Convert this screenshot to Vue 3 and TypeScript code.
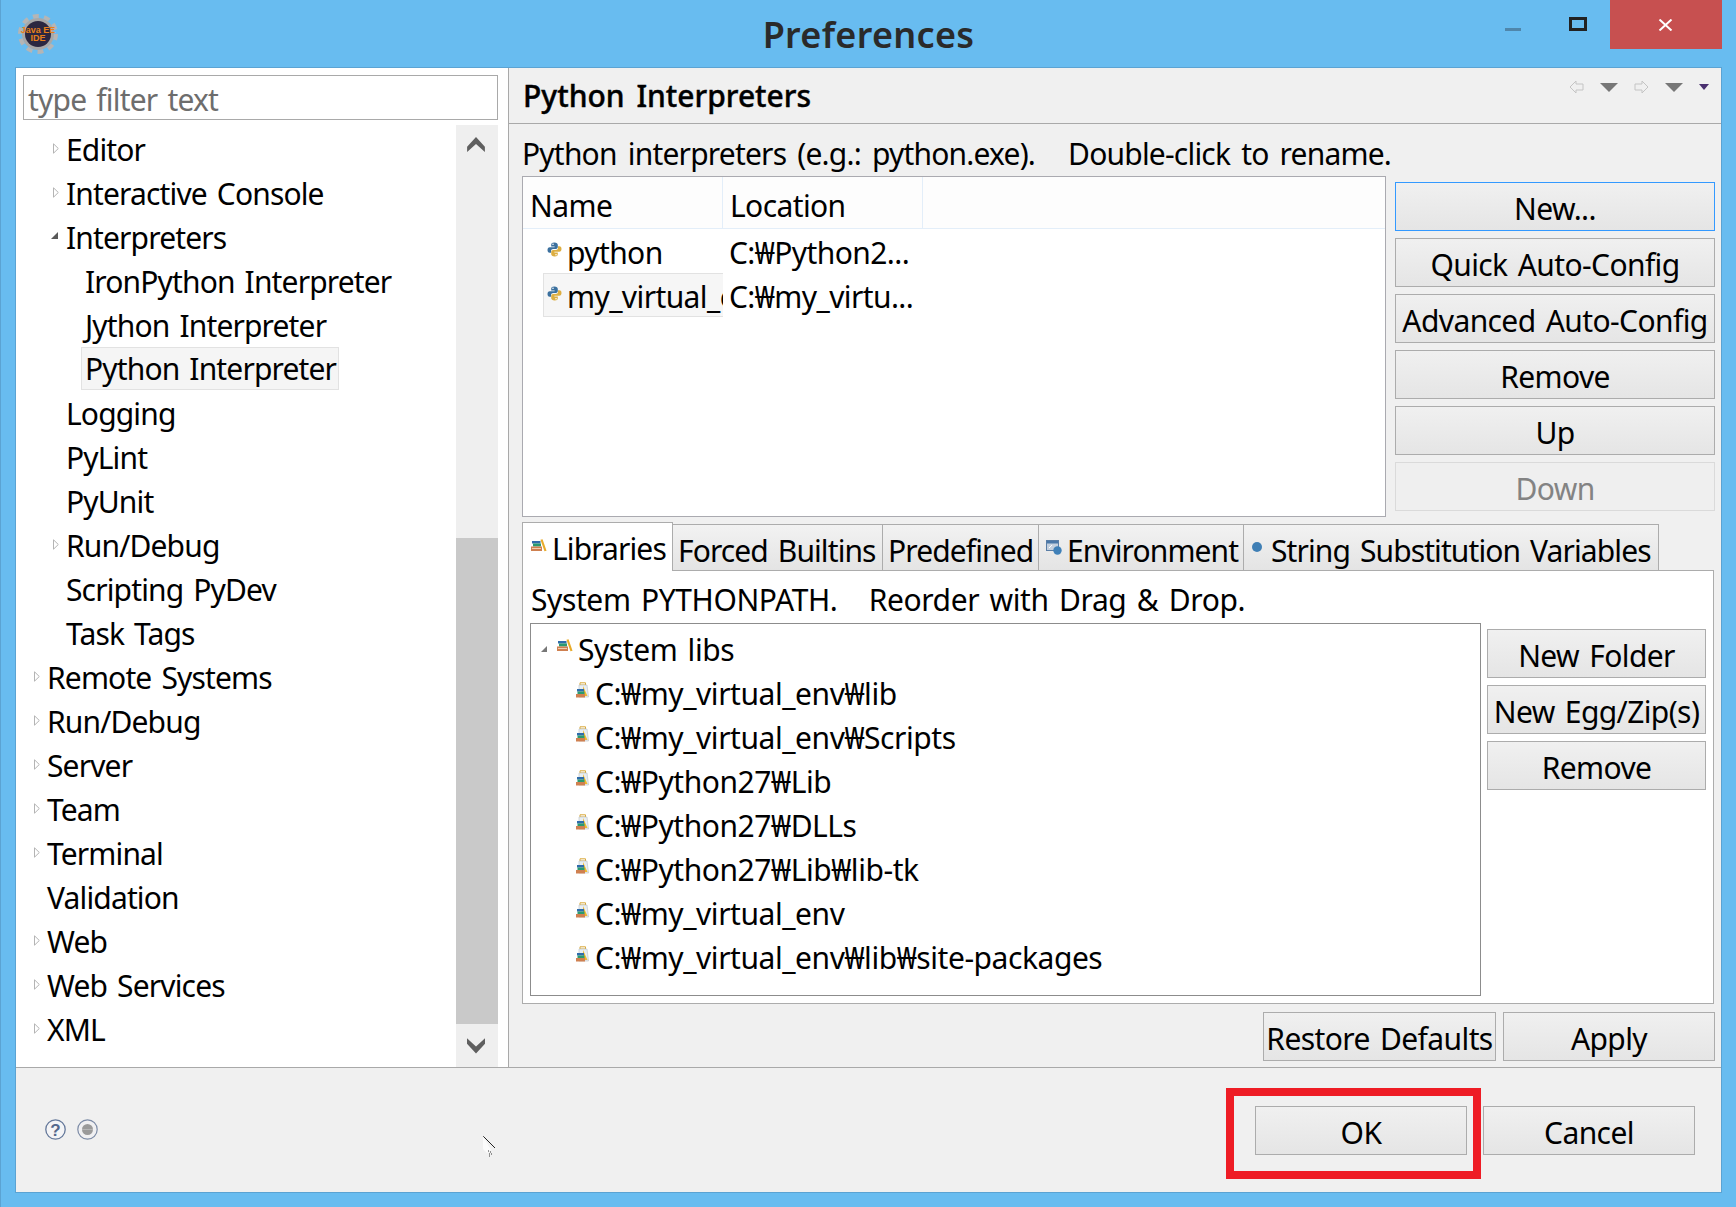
<script setup lang="ts">
type TreeRow = { label: string; level: number; arrow?: "closed" | "open"; selected?: boolean };

const navRows: TreeRow[] = [
  { label: "Editor", level: 1, arrow: "closed" },
  { label: "Interactive Console", level: 1, arrow: "closed" },
  { label: "Interpreters", level: 1, arrow: "open" },
  { label: "IronPython Interpreter", level: 2 },
  { label: "Jython Interpreter", level: 2 },
  { label: "Python Interpreter", level: 2, selected: true },
  { label: "Logging", level: 1 },
  { label: "PyLint", level: 1 },
  { label: "PyUnit", level: 1 },
  { label: "Run/Debug", level: 1, arrow: "closed" },
  { label: "Scripting PyDev", level: 1 },
  { label: "Task Tags", level: 1 },
  { label: "Remote Systems", level: 0, arrow: "closed" },
  { label: "Run/Debug", level: 0, arrow: "closed" },
  { label: "Server", level: 0, arrow: "closed" },
  { label: "Team", level: 0, arrow: "closed" },
  { label: "Terminal", level: 0, arrow: "closed" },
  { label: "Validation", level: 0 },
  { label: "Web", level: 0, arrow: "closed" },
  { label: "Web Services", level: 0, arrow: "closed" },
  { label: "XML", level: 0, arrow: "closed" },
];

const interpreters = [
  { name: "python", location: "C:₩Python2...", picked: false },
  { name: "my_virtual_env", location: "C:₩my_virtu...", picked: true },
];

const interpreterButtons = ["New...", "Quick Auto-Config", "Advanced Auto-Config", "Remove", "Up", "Down"];

const libPaths = [
  "C:₩my_virtual_env₩lib",
  "C:₩my_virtual_env₩Scripts",
  "C:₩Python27₩Lib",
  "C:₩Python27₩DLLs",
  "C:₩Python27₩Lib₩lib-tk",
  "C:₩my_virtual_env",
  "C:₩my_virtual_env₩lib₩site-packages",
];

const snake = "M7.400 .5C4.600 .5 4.200 1.700 4.200 3V4.500H7.600V5.200H2.800C1.200 5.200 .5 6.400 .5 8S1.200 10.700 2.600 10.700H4V9C4 7.800 5 7 6.200 7H9C10 7 10.800 6.200 10.800 5.100V3C10.800 1.500 9.600 .5 7.400 .5Z";
</script>

<template>
  <div class="window">
    <svg class="defs" width="0" height="0">
      <symbol id="books" viewBox="0 0 16 13">
        <path d="M10.500 .5 14.500 12" stroke="#e8ab2a" stroke-width="2.200" fill="none" />
        <rect x="1" y="2" width="8.500" height="2.500" fill="#2f6cab" />
        <rect x="2" y="4.500" width="8" height="3" fill="#2a9a70" />
        <rect x="0" y="7.500" width="11" height="4.500" fill="#cf8050" />
        <rect x="1" y="9" width="9" height="1" fill="#f0d0b0" />
      </symbol>
    </svg>

    <header class="titlebar">
      <svg class="logo" width="40" height="40" viewBox="0 0 40 40">
        <circle cx="20" cy="20" r="16" fill="#a8a8a8" />
        <circle cx="20" cy="20" r="18" fill="none" stroke="#b5b5b5" stroke-width="4" stroke-dasharray="6 5.300" />
        <circle cx="20" cy="20" r="13" fill="#2b2740" />
        <text x="20" y="18.500" text-anchor="middle" class="logo-text">Java EE</text>
        <text x="20" y="27" text-anchor="middle" class="logo-text">IDE</text>
      </svg>
      <div class="title">Preferences</div>
      <div class="controls">
        <span class="minimize"></span>
        <span class="maximize"></span>
        <span class="close">
          <svg width="15" height="12" viewBox="0 0 15 12"><path d="M1.500 .5 13.500 11.500M13.500 .5 1.500 11.500" stroke="#fff" stroke-width="2" /></svg>
        </span>
      </div>
    </header>

    <div class="dialog">
      <div class="main">
        <aside class="nav">
          <div class="filter">type filter text</div>
          <div class="nav-body">
            <ul class="nav-tree">
              <li v-for="row in navRows" :key="row.label + row.level" class="nav-row" :class="`lv${row.level}`">
                <svg v-if="row.arrow === 'closed'" class="arrow closed" width="6" height="11" viewBox="0 0 6 11">
                  <path d="M.5 .8 5.300 5.500 .5 10.200Z" fill="#fff" stroke="#b4b4b4" />
                </svg>
                <svg v-if="row.arrow === 'open'" class="arrow open" width="7" height="7" viewBox="0 0 7 7">
                  <path d="M7 0V7H0Z" fill="#595959" />
                </svg>
                <span :class="{ selected: row.selected }">{{ row.label }}</span>
              </li>
            </ul>
            <div class="scrollbar">
              <svg class="chev" width="18" height="16" viewBox="0 0 20 18"><path d="M0 11 10 0 20 11V17L10 8 0 17Z" fill="#5f5f5f" /></svg>
              <div class="thumb-space"></div>
              <div class="thumb"></div>
              <svg class="chev" width="18" height="17" viewBox="0 0 20 18"><path d="M0 1 10 10 20 1V7L10 18 0 7Z" fill="#5f5f5f" /></svg>
            </div>
          </div>
        </aside>

        <section class="page">
          <div class="page-head">
            <h1>Python Interpreters</h1>
            <div class="page-tools">
              <svg width="15" height="14" viewBox="0 0 15 14"><path d="M7 1 1 7l6 6V10h7V4H7Z" fill="none" stroke="#c4c4c4" /></svg>
              <i class="drop big"></i>
              <svg width="15" height="14" viewBox="0 0 15 14"><path d="M8 1l6 6-6 6V10H1V4h7Z" fill="none" stroke="#c4c4c4" /></svg>
              <i class="drop big"></i>
              <i class="drop small"></i>
            </div>
          </div>

          <div class="page-body">
            <p class="hint">Python interpreters (e.g.: python.exe).&nbsp;&nbsp; Double-click to rename.</p>
            <div class="interp-row">
              <div class="table">
                <div class="thead">
                  <span class="col-name">Name</span>
                  <span class="col-loc">Location</span>
                </div>
                <div v-for="it in interpreters" :key="it.name" class="tr">
                  <span class="cell-name" :class="{ picked: it.picked }">
                    <svg class="py" width="15" height="15" viewBox="0 0 15 15">
                      <path :d="snake" fill="#3b709e" />
                      <path :d="snake" fill="#dcae42" transform="rotate(180 7.500 7.500)" />
                      <circle cx="6" cy="2.300" r=".8" fill="#fff" />
                      <circle cx="9" cy="12.700" r=".8" fill="#fff" />
                    </svg>
                    <span class="clip">{{ it.name }}</span>
                  </span>
                  <span class="cell-loc">{{ it.location }}</span>
                </div>
              </div>
              <div class="btn-col">
                <button
                  v-for="(b, i) in interpreterButtons"
                  :key="b"
                  class="btn"
                  :class="{ focused: i === 0, disabled: b === 'Down' }"
                >{{ b }}</button>
              </div>
            </div>

            <div class="tabs">
              <div class="tab active" style="width: 151px">
                <svg width="16" height="13"><use href="#books" /></svg>
                <span>Libraries</span>
              </div>
              <div class="tab" style="width: 210px"><span>Forced Builtins</span></div>
              <div class="tab" style="width: 156px"><span>Predefined</span></div>
              <div class="tab tab-env" style="width: 205px">
                <svg width="16" height="15" viewBox="0 0 16 15">
                  <rect x="0.500" y="0.500" width="12" height="10" fill="#c4d0de" stroke="#5a7ea6" />
                  <rect x="1" y="1" width="11" height="2.500" fill="#4b78a8" />
                  <path d="M3 8 6 5" stroke="#fff" />
                  <circle cx="11.500" cy="10.500" r="4.200" fill="#3f80b8" />
                </svg>
                <span>Environment</span>
              </div>
              <div class="tab" style="width: 415px">
                <i class="dot"></i>
                <span>String Substitution Variables</span>
              </div>
            </div>

            <div class="tab-panel">
              <p class="hint small">System PYTHONPATH.&nbsp;&nbsp; Reorder with Drag &amp; Drop.</p>
              <div class="lib-row">
                <div class="lib-tree">
                  <div class="lib-row-item root">
                    <i class="mini"></i>
                    <svg width="16" height="13"><use href="#books" /></svg>
                    <span>System libs</span>
                  </div>
                  <div v-for="p in libPaths" :key="p" class="lib-row-item">
                    <svg width="13" height="16" viewBox="0 0 13 16">
                      <path d="M4 .8h5.500V3H4Z" fill="none" stroke="#d9a93a" />
                      <path d="M3 3h8l1.500 12H3Z" fill="#e9eef2" stroke="#b9bfc4" stroke-width=".6" />
                      <path d="M7 4 11.500 14H7Z" fill="#efb92e" />
                      <rect x="1" y="7" width="7" height="2.500" fill="#2f6cab" />
                      <rect x="1.500" y="9.500" width="7" height="2.500" fill="#2a9a70" />
                      <rect x="0" y="12" width="9" height="3.500" fill="#cf8050" />
                    </svg>
                    <span>{{ p }}</span>
                  </div>
                </div>
                <div class="side-btns">
                  <button class="btn">New Folder</button>
                  <button class="btn">New Egg/Zip(s)</button>
                  <button class="btn">Remove</button>
                </div>
              </div>
            </div>

            <div class="page-actions">
              <button class="btn restore">Restore Defaults</button>
              <button class="btn apply">Apply</button>
            </div>
          </div>
        </section>
      </div>

      <footer class="footer">
        <div class="help">
          <svg width="21" height="21" viewBox="0 0 21 21">
            <circle cx="10.500" cy="10.500" r="9.700" fill="#f4f4f6" stroke="#64789a" stroke-width="1.300" />
            <text x="10.500" y="16.500" text-anchor="middle" class="q">?</text>
          </svg>
          <svg width="21" height="21" viewBox="0 0 21 21">
            <circle cx="10.500" cy="10.500" r="9.700" fill="#f0f0f2" stroke="#7c8ba6" stroke-width="1.200" />
            <circle cx="10.500" cy="10.500" r="5.500" fill="#9a9a9a" />
            <rect x="5" y="10" width="11" height="1" fill="#b5b5b5" />
          </svg>
        </div>
        <div class="footer-btns">
          <button class="btn ok">OK</button>
          <button class="btn ok">Cancel</button>
          <div class="red-box"></div>
        </div>
        <svg class="cursor" width="14" height="22" viewBox="0 0 14 22">
          <path d="M1 1 13 13" stroke="#222" fill="none" />
          <path d="M1 1V14L5 18 9 15Z" fill="#fbfbfb" />
          <path d="M6 16h1M8 17h1M7 19h1M9 19h1M7 21h1" stroke="#333" />
        </svg>
      </footer>
    </div>
  </div>
</template>

<style>
html,
body {
  margin: 0;
  background: #68bcf0;
}
</style>

<style scoped>
* {
  box-sizing: border-box;
}
.defs {
  position: absolute;
}
.window {
  width: 1736px;
  height: 1207px;
  background: #68bcf0;
  border-left: 1px solid #5ba3d3;
  display: flex;
  flex-direction: column;
  font-family: "Noto Sans", "Noto Sans CJK KR", sans-serif;
  font-size: 30px;
  letter-spacing: -0.6px;
  word-spacing: 3px;
  color: #000;
  overflow: hidden;
}
.titlebar {
  height: 67px;
  flex: none;
  display: grid;
  grid-template-columns: 1fr auto 1fr;
  align-items: start;
}
.logo {
  margin: 14px 0 0 17px;
}
.logo-text {
  font: 700 9px "Liberation Sans", sans-serif;
  letter-spacing: 0;
  word-spacing: 0;
  fill: #e8801a;
}
.title {
  font-size: 36px;
  font-weight: 600;
  letter-spacing: 0.3px;
  color: #2a2a2a;
  line-height: 70px;
}
.controls {
  display: flex;
  justify-content: flex-end;
  align-items: flex-start;
  margin-right: 14px;
}
.minimize {
  width: 16px;
  height: 3px;
  background: #4f86ab;
  margin: 28px 48px 0 0;
}
.maximize {
  width: 18px;
  height: 14px;
  border: 3px solid #222;
  margin: 17px 23px 0 0;
}
.close {
  width: 112px;
  height: 49px;
  background: #c75050;
  display: flex;
  align-items: center;
  justify-content: center;
  padding-right: 2px;
}
.dialog {
  height: 1126px;
  margin: 0 14px 0 14px;
  border: 1px solid #5ba3d3;
  background: #f0f0f0;
  display: flex;
  flex-direction: column;
}
.main {
  height: 1000px;
  flex: none;
  display: flex;
  border-bottom: 1px solid #a9a9a9;
}

/* left tree */
.nav {
  width: 493px;
  flex: none;
  background: #fff;
  border-right: 1px solid #a9a9a9;
  padding: 7px 10px 0 7px;
  display: flex;
  flex-direction: column;
}
.filter {
  height: 45px;
  flex: none;
  border: 1px solid #a9a9a9;
  padding: 5px 0 0 4px;
  color: #6d6d6d;
  line-height: 38px;
  letter-spacing: -0.8px;
  white-space: nowrap;
}
.nav-body {
  flex: 1;
  min-height: 0;
  display: flex;
  padding-top: 5px;
}
.nav-tree {
  flex: 1;
  list-style: none;
  margin: 0;
  padding: 3px 0 0;
  letter-spacing: -0.85px;
}
.nav-row {
  height: 44px;
  line-height: 44px;
  display: flex;
  align-items: center;
  white-space: nowrap;
  position: relative;
}
.lv0 {
  padding-left: 24px;
}
.lv1 {
  padding-left: 43px;
}
.lv2 {
  padding-left: 62px;
}
.selected {
  display: inline-block;
  height: 43px;
  line-height: 41px;
  margin: -4px 0 0 -4px;
  padding: 0 2px 0 3px;
  background: #f5f5f5;
  border: 1px solid #e2e2e2;
}
.arrow {
  position: absolute;
}
.arrow.closed {
  top: 15px;
  margin-left: -13px;
}
.arrow.open {
  top: 16px;
  margin-left: -15px;
}
.mini {
  width: 0;
  height: 0;
  flex: none;
  margin-right: 5px;
  border-bottom: 6px solid #777;
  border-left: 6px solid transparent;
}
.scrollbar {
  width: 42px;
  flex: none;
  background: #efefef;
  display: flex;
  flex-direction: column;
  align-items: center;
  padding: 12px 2px 0 0;
}
.chev {
  flex: none;
}
.thumb-space {
  height: 385px;
  flex: none;
}
.thumb {
  width: 42px;
  height: 486px;
  flex: none;
  background: #c9c9c9;
  margin: 0 -2px 13px 0;
}

/* right page */
.page {
  flex: 1;
  min-width: 0;
  display: flex;
  flex-direction: column;
}
.page-head {
  height: 56px;
  flex: none;
  border-bottom: 1px solid #a9a9a9;
  padding-left: 14px;
  display: flex;
  justify-content: space-between;
}
.page-head h1 {
  margin: 0;
  font-size: 30px;
  font-weight: 500;
  letter-spacing: 0;
  word-spacing: 4px;
  line-height: 56px;
  -webkit-text-stroke: 0.4px #000;
}
.page-tools {
  display: flex;
  align-items: center;
  gap: 16px;
  height: 38px;
  padding-right: 12px;
}
.drop {
  width: 0;
  height: 0;
  display: block;
}
.drop.big {
  border-left: 9px solid transparent;
  border-right: 9px solid transparent;
  border-top: 9px solid #777;
}
.drop.small {
  border-left: 5px solid transparent;
  border-right: 5px solid transparent;
  border-top: 6px solid #4a3070;
}
.page-body {
  flex: 1;
  padding: 6px 5px 0 13px;
}
.hint {
  margin: 0;
  height: 46px;
  line-height: 47px;
  letter-spacing: -0.8px;
  word-spacing: 4px;
  white-space: pre;
}
.hint.small {
  height: 47px;
  line-height: 47px;
  letter-spacing: -0.4px;
  word-spacing: 3px;
  padding-left: 1px;
}
.interp-row {
  display: flex;
  gap: 9px;
  height: 341px;
}
.table {
  width: 864px;
  flex: none;
  height: 341px;
  border: 1px solid #aaaab0;
  background: #fff;
}
.thead {
  height: 52px;
  background: #fdfdfd;
  border-bottom: 1px solid #e3eef9;
  display: flex;
  line-height: 58px;
}
.col-name {
  width: 200px;
  padding-left: 7px;
  border-right: 1px solid #e3eef9;
}
.col-loc {
  width: 200px;
  padding-left: 7px;
  border-right: 1px solid #e3eef9;
}
.tr {
  height: 44px;
  display: flex;
  align-items: center;
  white-space: nowrap;
}
.cell-name {
  width: 200px;
  flex: none;
  height: 44px;
  padding: 2px 0 0 24px;
  display: flex;
  align-items: center;
}
.cell-name.picked {
  width: 180px;
  margin-left: 20px;
  padding-left: 3px;
  background: #f6f6f6;
  border: 1px solid #e2e2e2;
  border-right: none;
  overflow: hidden;
}
.py {
  flex: none;
  margin-right: 5px;
  margin-top: -6px;
}
.clip {
  overflow: hidden;
}
.cell-loc {
  padding: 2px 0 0 6px;
}
.btn-col {
  width: 320px;
  flex: none;
  display: flex;
  flex-direction: column;
  gap: 7px;
  padding-top: 6px;
}
.btn {
  height: 49px;
  padding: 5px 0 0;
  font: inherit;
  letter-spacing: inherit;
  word-spacing: inherit;
  color: #000;
  white-space: nowrap;
  border: 1px solid #acacac;
  background: linear-gradient(#f0f0f0, #e5e5e5);
  line-height: 40px;
  flex: none;
}
.btn.focused {
  border-color: #3399ff;
}
.btn.disabled {
  color: #838383;
  background: #efefef;
  border-color: #dadada;
}
.tabs {
  display: flex;
  align-items: flex-end;
  height: 49px;
  margin-top: 5px;
  letter-spacing: -0.9px;
}
.tab {
  height: 47px;
  display: flex;
  align-items: center;
  gap: 6px;
  padding: 5px 0 0 5px;
  white-space: nowrap;
  flex: none;
  border: 1px solid #acacac;
  border-left: none;
  background: linear-gradient(#f2f2f2, #e4e4e4);
}
.tab svg {
  flex: none;
  margin-top: -6px;
}
.tab.active {
  height: 49px;
  background: #fff;
  border-left: 1px solid #acacac;
  border-bottom: none;
  position: relative;
  z-index: 1;
  padding: 2px 0 0 8px;
  gap: 5px;
}
.tab-env {
  padding-left: 7px;
  gap: 5px;
}
.dot {
  width: 10px;
  height: 10px;
  border-radius: 50%;
  background: #3f7fb5;
  margin: -6px 3px 0 3px;
  flex: none;
}
.tab-panel {
  height: 434px;
  width: 1192px;
  background: #fff;
  border: 1px solid #acacac;
  margin-top: -1px;
  padding: 5px 0 0 7px;
}
.lib-row {
  display: flex;
  gap: 6px;
}
.lib-tree {
  width: 951px;
  height: 373px;
  flex: none;
  border: 1px solid #8c8c8c;
  background: #fff;
  padding-top: 3px;
  letter-spacing: -0.45px;
}
.lib-row-item {
  height: 44px;
  display: flex;
  align-items: center;
  white-space: nowrap;
  padding-left: 45px;
  gap: 6px;
}
.lib-row-item svg {
  flex: none;
  margin-top: -7px;
}
.lib-row-item.root {
  padding-left: 10px;
  gap: 5px;
}
.side-btns {
  width: 219px;
  flex: none;
  display: flex;
  flex-direction: column;
  gap: 7px;
  padding-top: 6px;
}
.page-actions {
  display: flex;
  justify-content: flex-end;
  gap: 7px;
  padding: 8px 1px 0 0;
}
.restore {
  width: 233px;
}
.apply {
  width: 212px;
}

/* footer */
.footer {
  flex: 1;
  position: relative;
  display: flex;
  justify-content: space-between;
  padding: 38px 26px 0 29px;
}
.help {
  display: flex;
  gap: 11px;
  padding-top: 13px;
}
.footer-btns {
  display: flex;
  gap: 16px;
  position: relative;
}
.btn.ok {
  width: 212px;
}
.red-box {
  position: absolute;
  left: -29px;
  top: -18px;
  width: 255px;
  height: 91px;
  border: 8px solid #ee1c25;
}
.cursor {
  position: absolute;
  left: 466px;
  top: 67px;
}
.q {
  font: 700 17px "Liberation Sans", sans-serif;
  letter-spacing: 0;
  fill: #54688c;
}
</style>
